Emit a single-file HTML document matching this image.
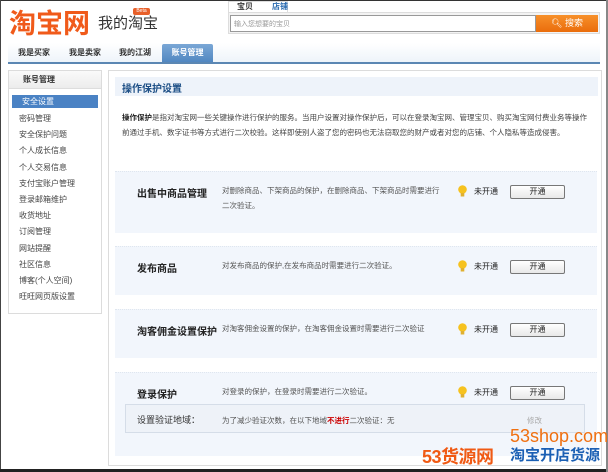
<!DOCTYPE html>
<html><head><meta charset="utf-8"><style>
*{margin:0;padding:0;box-sizing:border-box}
body{width:608px;height:472px;overflow:hidden;background:#fff;position:relative;font-family:"Liberation Sans","Noto Sans CJK SC",sans-serif;font-size:8px;color:#333}
.a{position:absolute;white-space:nowrap}
.sec{position:absolute;left:115px;width:482px;background:#f2f6fc;border-top:1px dotted #dfe6ef}
.t{position:absolute;left:22px;font-size:10px;font-weight:bold;color:#222}
.d{position:absolute;left:107px;font-size:7.5px;color:#555;line-height:15px}
.bulb{position:absolute;left:343px;width:9px;height:12px}
.st{position:absolute;left:359px;font-size:8px;color:#222}
.btn{position:absolute;left:395px;width:55px;height:14px;border:1px solid #777;border-radius:2px;background:linear-gradient(#fff,#e8e8e8);font-size:8px;text-align:center;line-height:12px;color:#222}
.sb div{height:16.2px;line-height:16px;padding-left:10px;font-size:8px;color:#444}
</style></head><body>
<div class="a" style="left:0;top:0;width:608px;height:1px;background:#333"></div>
<div class="a" style="left:0;top:0;width:1px;height:472px;background:#444"></div>
<div class="a" style="left:0;top:469px;width:608px;height:3px;background:#222"></div>
<div class="a" style="left:606px;top:0;width:2px;height:472px;background:#888"></div>

<div class="a" style="left:9px;top:2px;font-size:27px;font-weight:bold;color:#f05a1a;letter-spacing:0">淘宝网</div>
<div class="a" style="left:98px;top:12px;font-size:15px;color:#333">我的淘宝</div>
<div class="a" style="left:133px;top:8px;width:17px;height:7px;background:#e8602a;border-radius:2px;font-size:5px;color:#fff;text-align:center;line-height:7px">Beta</div>

<div class="a" style="left:228px;top:1px;width:60px;height:12px;background:#fff;border:1px solid #ddd;border-bottom:none"></div>
<div class="a" style="left:237px;top:1px;font-size:8px;font-weight:bold;color:#333">宝贝</div>
<div class="a" style="left:272px;top:1px;font-size:8px;font-weight:bold;color:#2a6bb0">店铺</div>
<div class="a" style="left:228px;top:12px;width:372px;height:22px;background:#f3f3f3;border:1px solid #ddd"></div>
<div class="a" style="left:230px;top:15px;width:306px;height:17px;background:#fff;border:1px solid #999;font-size:7px;color:#999;padding:3px 3px">输入您想要的宝贝</div>
<div class="a" style="left:536px;top:15px;width:62px;height:17px;background:linear-gradient(#f7902a,#ea6d0c);color:#fff;font-size:9px;text-align:center;line-height:17px">🔍︎ 搜索</div>

<div class="a" style="left:8px;top:43px;width:592px;height:19px;background:linear-gradient(#fff,#eef4fa)"></div>
<div class="a" style="left:18px;top:47px;font-size:8px;font-weight:bold;color:#333">我是买家</div>
<div class="a" style="left:69px;top:47px;font-size:8px;font-weight:bold;color:#333">我是卖家</div>
<div class="a" style="left:119px;top:47px;font-size:8px;font-weight:bold;color:#333">我的江湖</div>
<div class="a" style="left:162px;top:44px;width:51px;height:19px;background:linear-gradient(#7aa7d6,#4f86c0);border-radius:2px 2px 0 0;color:#fff;font-size:8px;font-weight:bold;text-align:center;line-height:18px">账号管理</div>
<div class="a" style="left:8px;top:62px;width:592px;height:2px;background:#5b87b3"></div>

<div class="a sb" style="left:8px;top:70px;width:94px;height:244px;border:1px solid #dcdcdc">
<div style="height:18px;line-height:17px;background:linear-gradient(#fafafa,#ececec);font-weight:bold;color:#333;padding-left:14px;border-bottom:1px solid #ddd;margin-bottom:6px">账号管理</div>
<div style="background:#4a82c4;color:#fff;margin:0 3px;padding-left:10px;height:13px;line-height:13px;margin-bottom:3px">安全设置</div>
<div>密码管理</div><div>安全保护问题</div><div>个人成长信息</div><div>个人交易信息</div><div>支付宝账户管理</div><div>登录邮箱维护</div><div>收货地址</div><div>订阅管理</div><div>网站提醒</div><div>社区信息</div><div>博客(个人空间)</div><div>旺旺网页版设置</div>
</div>

<div class="a" style="left:108px;top:70px;width:494px;height:396px;border:1px solid #dcdcdc"></div>
<div class="a" style="left:115px;top:77px;width:483px;height:19px;background:#eef3fa"></div>
<div class="a" style="left:122px;top:80px;font-size:10px;font-weight:bold;color:#1d4f86">操作保护设置</div>
<div class="a" style="left:122px;top:110px;font-size:7.5px;color:#444;line-height:15px"><b style="color:#222">操作保护</b>是指对淘宝网一些关键操作进行保护的服务。当用户设置对操作保护后，可以在登录淘宝网、管理宝贝、购买淘宝网付费业务等操作<br>前通过手机、数字证书等方式进行二次校验。这样即使别人盗了您的密码也无法窃取您的财产或者对您的店铺、个人隐私等造成侵害。</div>

<div class="sec" style="top:171px;height:62px">
<div class="t" style="top:13px">出售中商品管理</div>
<div class="d" style="top:11px">对删除商品、下架商品的保护，在删除商品、下架商品时需要进行<br>二次验证。</div>
<svg class="bulb" style="top:13px" viewBox="0 0 9 12"><ellipse cx="4.5" cy="4.5" rx="4.3" ry="4.3" fill="#f6c21f"/><rect x="2.7" y="8" width="3.6" height="3.5" fill="#e0b030"/></svg>
<div class="st" style="top:14px">未开通</div><div class="btn" style="top:13px">开通</div>
</div>
<div class="sec" style="top:246px;height:49px">
<div class="t" style="top:13px">发布商品</div>
<div class="d" style="top:11px">对发布商品的保护,在发布商品时需要进行二次验证。</div>
<svg class="bulb" style="top:13px" viewBox="0 0 9 12"><ellipse cx="4.5" cy="4.5" rx="4.3" ry="4.3" fill="#f6c21f"/><rect x="2.7" y="8" width="3.6" height="3.5" fill="#e0b030"/></svg>
<div class="st" style="top:14px">未开通</div><div class="btn" style="top:13px">开通</div>
</div>
<div class="sec" style="top:309px;height:49px">
<div class="t" style="top:13px">淘客佣金设置保护</div>
<div class="d" style="top:11px">对淘客佣金设置的保护，在淘客佣金设置时需要进行二次验证</div>
<svg class="bulb" style="top:13px" viewBox="0 0 9 12"><ellipse cx="4.5" cy="4.5" rx="4.3" ry="4.3" fill="#f6c21f"/><rect x="2.7" y="8" width="3.6" height="3.5" fill="#e0b030"/></svg>
<div class="st" style="top:14px">未开通</div><div class="btn" style="top:13px">开通</div>
</div>
<div class="sec" style="top:372px;height:84px">
<div class="t" style="top:13px">登录保护</div>
<div class="d" style="top:11px">对登录的保护，在登录时需要进行二次验证。</div>
<svg class="bulb" style="top:13px" viewBox="0 0 9 12"><ellipse cx="4.5" cy="4.5" rx="4.3" ry="4.3" fill="#f6c21f"/><rect x="2.7" y="8" width="3.6" height="3.5" fill="#e0b030"/></svg>
<div class="st" style="top:14px">未开通</div><div class="btn" style="top:13px">开通</div>
<div class="a" style="left:10px;top:31px;width:460px;height:29px;border:1px solid #d5dde8;background:#eef2f8"></div>
<div class="a" style="left:22px;top:40px;font-size:9px;color:#333">设置验证地域：</div>
<div class="a" style="left:107px;top:42px;font-size:7.5px;color:#555">为了减少验证次数，在以下地域<b style="color:#c00">不进行</b>二次验证：无</div>
<div class="a" style="left:412px;top:42px;font-size:7.5px;color:#aaa">修改</div>
</div>

<div class="a" style="left:510px;top:426px;font-size:18px;color:#f07010;font-family:'Liberation Sans',sans-serif">53shop.com</div>
<div class="a" style="left:422px;top:443px;font-size:18px;font-weight:bold;color:#f05a14;letter-spacing:-0.5px">53货源网</div>
<div class="a" style="left:510px;top:444px;font-size:15px;font-weight:bold;color:#1a5fb4">淘宝开店货源</div>
</body></html>
